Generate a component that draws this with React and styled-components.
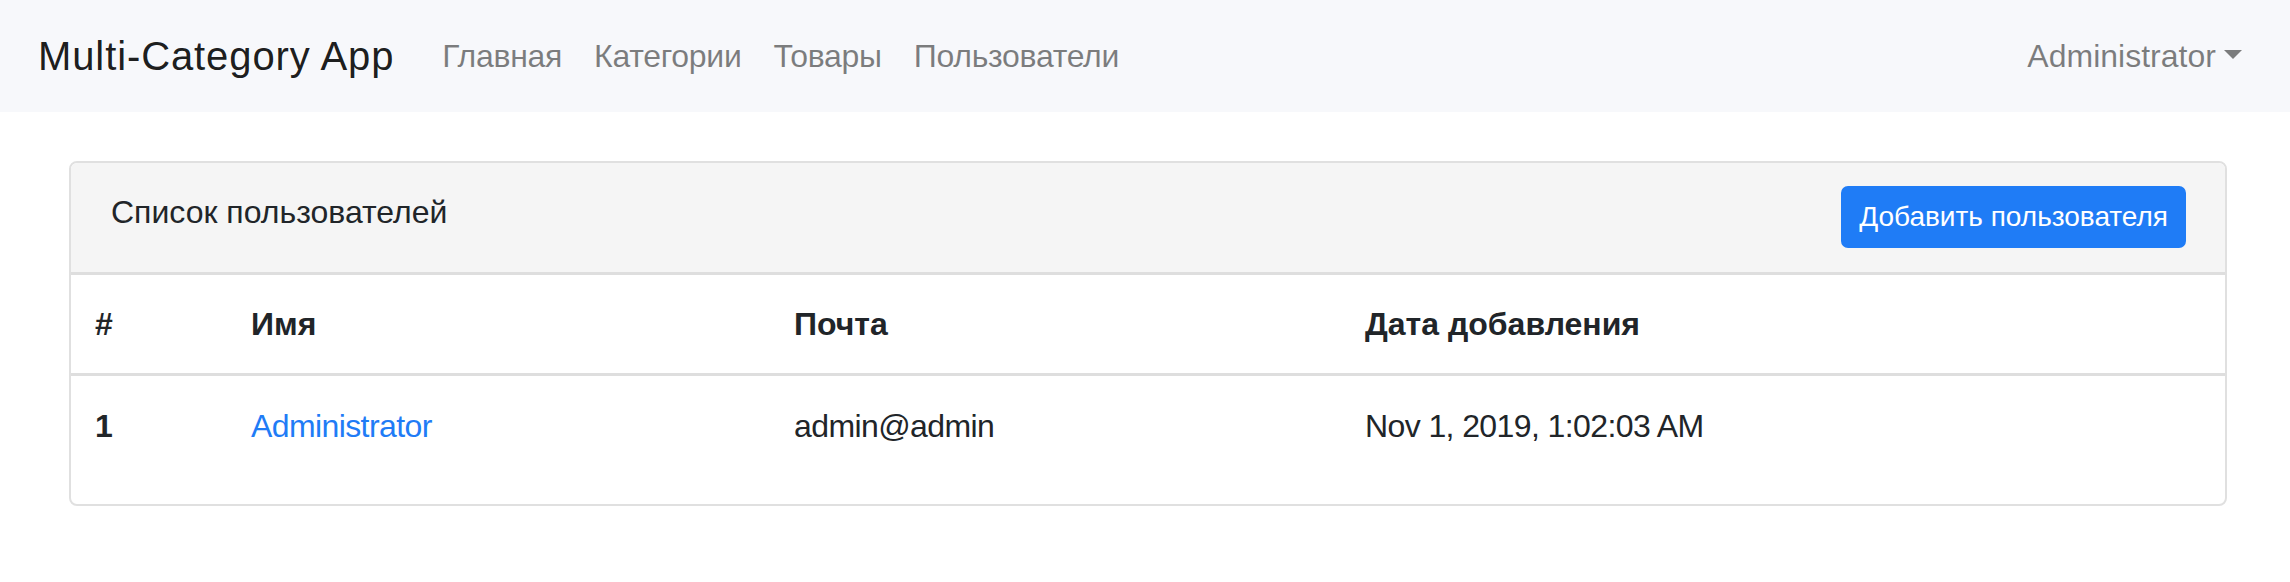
import styled, { createGlobalStyle } from "styled-components";

const GlobalStyle = createGlobalStyle`
  * {
    box-sizing: border-box;
  }
  html, body {
    margin: 0;
    padding: 0;
    background: #fff;
  }
  body {
    font-family: "Liberation Sans", Arial, sans-serif;
    font-size: 32px;
    line-height: 1.5;
    color: #212529;
  }
`;

const Navbar = styled.nav`
  height: 112px;
  padding: 16px 32px 16px 38px;
  display: flex;
  align-items: center;
  background-color: #f7f8fb;
`;

const Brand = styled.a`
  font-size: 40px;
  line-height: 60px;
  padding: 10px 0;
  margin-right: 32px;
  letter-spacing: 0.9px;
  color: rgba(0, 0, 0, 0.9);
  text-decoration: none;
  white-space: nowrap;
`;

const NavList = styled.ul`
  display: flex;
  list-style: none;
  margin: 0;
  padding: 0;
  margin-left: ${(p) => (p.$right ? "auto" : "0")};
`;

const NavLink = styled.a`
  display: block;
  padding: 16px;
  line-height: 48px;
  letter-spacing: ${(p) => (p.$tight ? "-0.3px" : "0")};
  color: rgba(0, 0, 0, 0.5);
  text-decoration: none;
  white-space: nowrap;
`;

const Caret = styled.span`
  display: inline-block;
  margin-left: 0.255em;
  vertical-align: 0.255em;
  border-top: 0.3em solid;
  border-right: 0.3em solid transparent;
  border-left: 0.3em solid transparent;
  border-bottom: 0;
`;

const Card = styled.section`
  margin: 49px 63px 0 69px;
  border: 2px solid #e0e0e0;
  border-radius: 8px;
  overflow: hidden;
`;

const CardHeader = styled.div`
  display: flex;
  justify-content: space-between;
  align-items: flex-start;
  padding: 23px 39px 24px 40px;
  background-color: #f5f5f5;
  border-bottom: 3px solid #dedede;
`;

const Title = styled.div`
  margin-top: 2px;
  line-height: 48px;
`;

const Button = styled.button`
  font-family: inherit;
  font-size: 28px;
  line-height: 42px;
  padding: 8px 16px;
  color: #fff;
  background-color: #1f7cf6;
  border: 2px solid #1f7cf6;
  border-radius: 7px;
  white-space: nowrap;
`;

const Table = styled.table`
  width: 100%;
  border-collapse: collapse;
  table-layout: fixed;
  margin-bottom: 30px;
`;

const Th = styled.th`
  text-align: left;
  font-weight: 700;
  padding: 25px 24px;
  line-height: 48px;
  border-bottom: 3px solid #dedede;
`;

const Td = styled.td`
  padding: 26px 24px 24px;
  line-height: 48px;
  letter-spacing: -0.6px;
  font-weight: ${(p) => (p.$bold ? 700 : 400)};
`;

const UserLink = styled.a`
  color: #1f7cf6;
  text-decoration: none;
`;

const links = ["Главная", "Категории", "Товары", "Пользователи"];

const users = [
  {
    id: 1,
    name: "Administrator",
    email: "admin@admin",
    created: "Nov 1, 2019, 1:02:03 AM",
  },
];

export default function App() {
  return (
    <>
      <GlobalStyle />
      <Navbar>
        <Brand href="#">Multi-Category App</Brand>
        <NavList>
          {links.map((l) => (
            <li key={l}>
              <NavLink href="#" $tight>{l}</NavLink>
            </li>
          ))}
        </NavList>
        <NavList $right>
          <li>
            <NavLink href="#">
              Administrator
              <Caret />
            </NavLink>
          </li>
        </NavList>
      </Navbar>

      <Card>
        <CardHeader>
          <Title>Список пользователей</Title>
          <Button>Добавить пользователя</Button>
        </CardHeader>
        <Table>
          <colgroup>
            <col style={{ width: 156 }} />
            <col style={{ width: 543 }} />
            <col style={{ width: 571 }} />
            <col />
          </colgroup>
          <thead>
            <tr>
              <Th>#</Th>
              <Th>Имя</Th>
              <Th>Почта</Th>
              <Th>Дата добавления</Th>
            </tr>
          </thead>
          <tbody>
            {users.map((u) => (
              <tr key={u.id}>
                <Td $bold>{u.id}</Td>
                <Td>
                  <UserLink href="#">{u.name}</UserLink>
                </Td>
                <Td>{u.email}</Td>
                <Td>{u.created}</Td>
              </tr>
            ))}
          </tbody>
        </Table>
      </Card>
    </>
  );
}
